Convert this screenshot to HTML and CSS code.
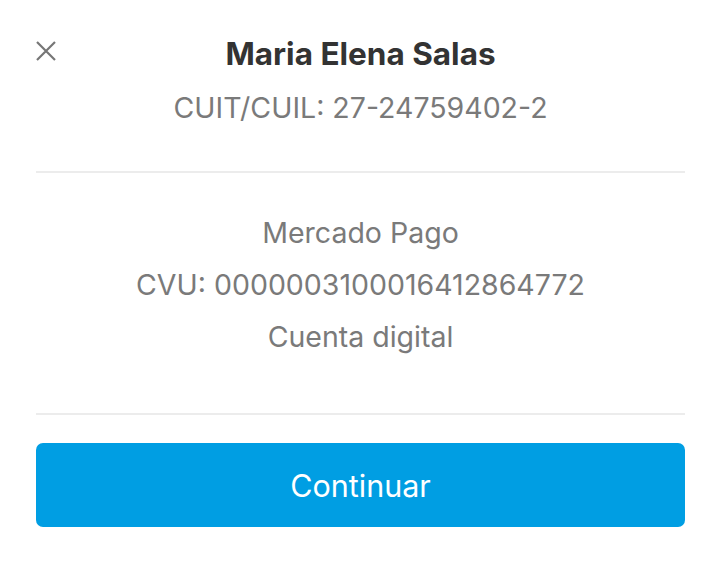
FILE: index.html
```html
<!DOCTYPE html>
<html lang="es">
<head>
<meta charset="utf-8">
<link rel="stylesheet" href="styles.css">
</head>
<body>
<div class="sheet">
  <header class="header">
    <button class="close" aria-label="Cerrar">
      <svg width="20" height="20" viewBox="0 0 20 20"><path d="M1 1L19 19M19 1L1 19" stroke="#767676" stroke-width="2.2" fill="none"/></svg>
    </button>
    <div class="who">
      <h1 class="name">Maria Elena Salas</h1>
      <p class="cuit">CUIT/CUIL: 27-24759402-2</p>
    </div>
    <span class="spacer"></span>
  </header>
  <hr class="sep">
  <section class="account">
    <p>Mercado Pago</p>
    <p>CVU: 0000003100016412864772</p>
    <p>Cuenta digital</p>
  </section>
  <hr class="sep sep2">
  <button class="cta">Continuar</button>
</div>
</body>
</html>
```
FILE: styles.css
```css
* { box-sizing: border-box; }
html, body { margin: 0; background: #fff; }
body { font-family: Inter, "Open Sans", sans-serif; }
.sheet { padding: 34px 35px 0 36px; }
.header { display: grid; grid-template-columns: 40px 1fr 40px; align-items: start; }
.close { border: 0; background: none; padding: 0; margin-top: 7px; width: 20px; height: 20px; display: block; }
.close svg { display: block; }
.who { text-align: center; }
.name { margin: 0; font-size: 31.5px; line-height: 40px; font-weight: 700; color: #333; }
.cuit { margin: 14px 0 0; font-size: 28.5px; line-height: 40px; color: #7a7a7a; }
.sep { border: 0; height: 2px; background: #ececec; margin: 43px 0 0; }
.account { padding-top: 34px; text-align: center; color: #7a7a7a; font-size: 28.5px; }
.account p { margin: 0; line-height: 52px; }
.sep2 { margin-top: 50px; }
.cta { display: block; width: 100%; margin-top: 28px; height: 84px; border: 0; border-radius: 7px; background: #009ee3; color: #fff; font-family: inherit; font-size: 30.5px; }
```
